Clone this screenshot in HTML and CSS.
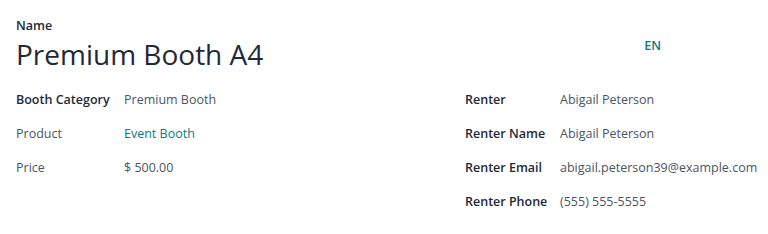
FILE: index.html
```html
<!DOCTYPE html>
<html lang="en">
<head>
    <meta charset="UTF-8">
    <meta name="viewport" content="width=device-width, initial-scale=1.0">
    <title>Premium Booth A4</title>
    <link rel="stylesheet" href="styles.css">
</head>
<body>
    <div class="sheet">
        <div class="title-row">
            <div class="title">
                <div class="title-label">Name</div>
                <h1>Premium Booth A4</h1>
            </div>
            <span class="lang">EN</span>
        </div>
        <div class="groups">
            <div class="group group-left">
                <div class="lbl strong">Booth Category</div>
                <div class="val">Premium Booth</div>
                <div class="lbl">Product</div>
                <div class="val"><a href="#" class="link">Event Booth</a></div>
                <div class="lbl">Price</div>
                <div class="val">$ 500.00</div>
            </div>
            <div class="group group-right">
                <div class="lbl strong">Renter</div>
                <div class="val">Abigail Peterson</div>
                <div class="lbl strong">Renter Name</div>
                <div class="val">Abigail Peterson</div>
                <div class="lbl strong">Renter Email</div>
                <div class="val">abigail.peterson39@example.com</div>
                <div class="lbl strong">Renter Phone</div>
                <div class="val">(555) 555-5555</div>
            </div>
        </div>
    </div>
</body>
</html>
```

FILE: styles.css
```css
body {
  margin: 0;
  background: #fff;
  font-family: "Open Sans", "Noto Sans", sans-serif;
  font-size: 12.5px;
  color: #4b5563;
}

.sheet {
  padding: 16px 16px 0 16px;
}

.title-row {
  display: flex;
  justify-content: space-between;
  align-items: flex-start;
  width: 645px;
}

.title-label {
  font-weight: 600;
  color: #1f2937;
  font-size: 12.5px;
  line-height: 18px;
  margin-top: 1px;
}

.title h1 {
  margin: 0;
  font-weight: 400;
  font-size: 28px;
  line-height: 38px;
  color: #1f2937;
}

.lang {
  margin-top: 21px;
  color: #017e84;
  font-weight: 600;
  font-size: 12.5px;
}

.groups {
  display: grid;
  grid-template-columns: 449px 1fr;
  margin-top: 9px;
}

.group {
  display: grid;
  grid-auto-rows: 34px;
  align-items: center;
}

.group-left {
  grid-template-columns: 108px 1fr;
}

.group-right {
  grid-template-columns: 95px 1fr;
}

.lbl {
  color: #4b5563;
}

.lbl.strong {
  font-weight: 600;
  color: #1f2937;
}

.val {
  color: #4b5563;
}

.link {
  color: #017e84;
  text-decoration: none;
}
```
